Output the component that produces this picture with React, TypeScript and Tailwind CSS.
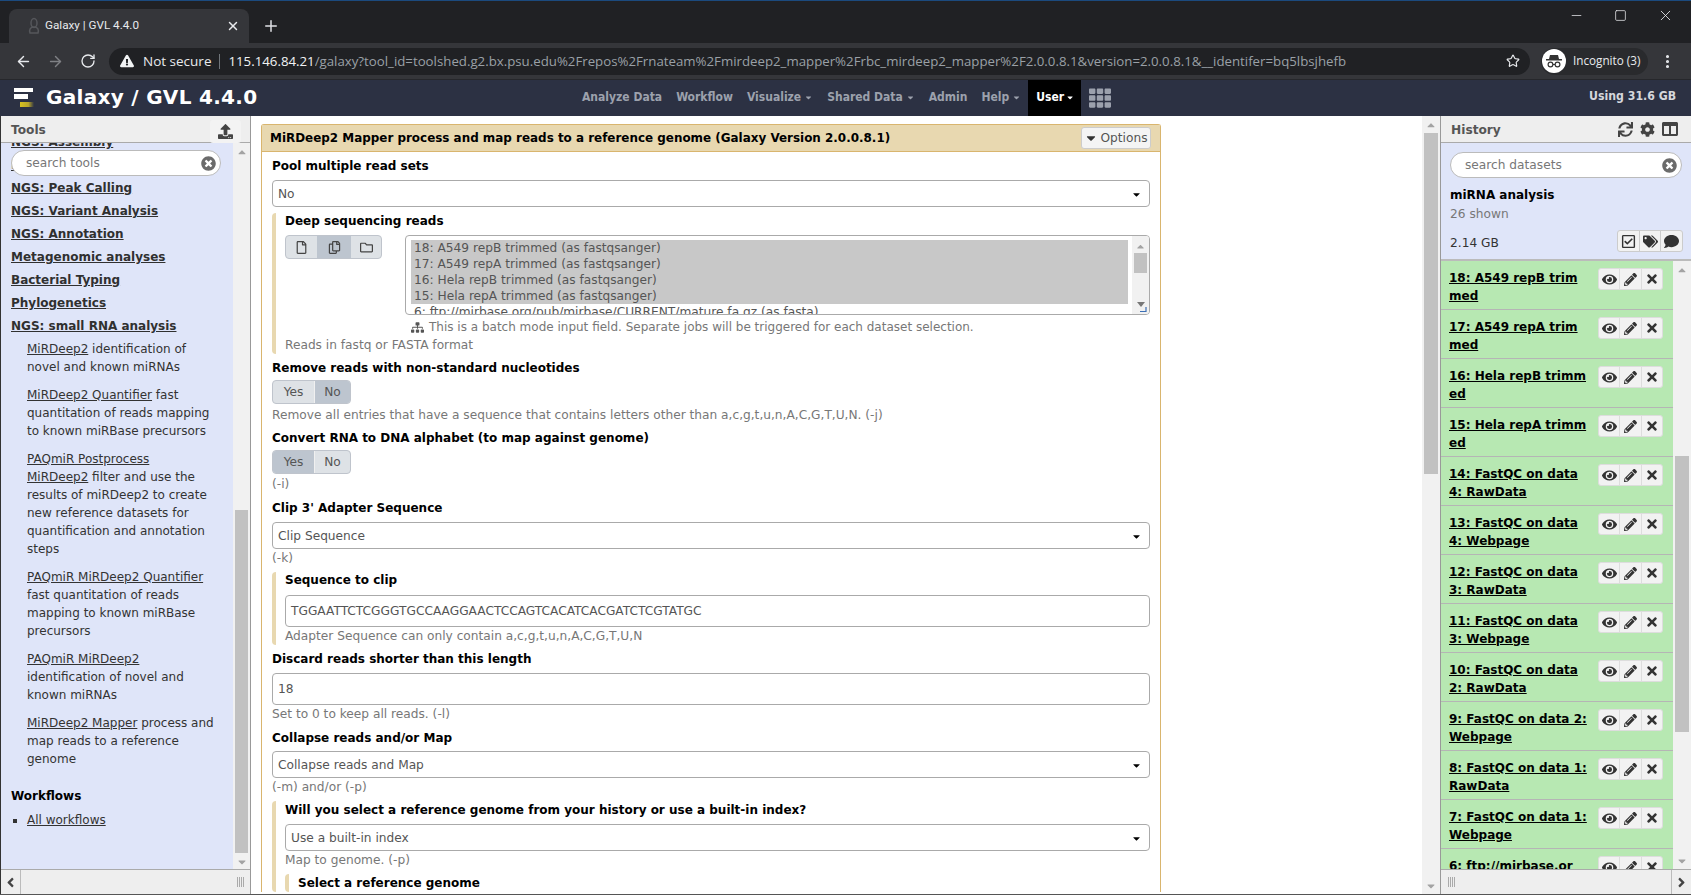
import React from "react";
import { FaEye, FaPencilAlt, FaTimes, FaSync, FaCog, FaColumns, FaRegCheckSquare, FaTags, FaComment, FaUpload, FaSitemap, FaRegFile, FaRegCopy, FaRegFolder, FaTimesCircle, FaAngleLeft, FaAngleRight, FaCaretDown, FaCaretUp, FaTh, FaExclamationTriangle } from "react-icons/fa";
import { ArrowLeft, ArrowRight, RotateCw, Star, X, Plus, Minus, Square, MoreVertical } from "lucide-react";

function VScroll({ top, thumb, cls = "w-[18px]" }: { top: number; thumb: number; cls?: string }) {
  return (
    <div className={`${cls} shrink-0 bg-[#f1f1f1] flex flex-col items-center text-[#a3a3a3]`}>
      <div className="h-[17px] flex items-center justify-center shrink-0"><FaCaretUp size={12} /></div>
      <div className="flex-1 w-full px-[2px]">
        <div className="w-full bg-[#c1c1c1]" style={{ marginTop: top, height: thumb }} />
      </div>
      <div className="h-[17px] flex items-center justify-center shrink-0"><FaCaretDown size={12} /></div>
    </div>
  );
}

function Grip({ cls }: { cls: string }) {
  return (
    <svg width="8" height="10" viewBox="0 0 8 10" className={cls} stroke="#aaa" strokeWidth="1">
      <path d="M0.5 0v10M2.5 0v10M4.5 0v10M6.5 0v10" />
    </svg>
  );
}

function Field({ value, h = "h-[27px]", caret = true }: { value: string; h?: string; caret?: boolean }) {
  return (
    <div className={`${h} border border-[#aaa] rounded-[4px] bg-white flex items-center justify-between pl-[5px] pr-[7px] pt-[1px] text-[#555]`}>
      <span>{value}</span>
      {caret && <FaCaretDown size={11} className="text-black" />}
    </div>
  );
}

function Label({ children, cls = "leading-[18px] h-[18px] pt-[1px]" }: { children: React.ReactNode; cls?: string }) {
  return <div className={`font-bold text-black text-[12px] ${cls}`}>{children}</div>;
}

function Hint({ children }: { children: React.ReactNode }) {
  return <div className="leading-[18px] text-[#777]">{children}</div>;
}

function Section({ children, cls = "" }: { children: React.ReactNode; cls?: string }) {
  return <div className={`border-l-4 border-[#e8d8b0] rounded-l-[4px] pl-[9px] ${cls}`}>{children}</div>;
}

function Toggle({ on }: { on: "Yes" | "No" }) {
  return (
    <div className="mt-[4px] flex w-[79px] h-[24px] border border-[#bfc4cc] rounded-[4px] overflow-hidden text-[#555] bg-[#dee2e6]">
      <div className={`w-[41px] flex items-center justify-center ${on === "Yes" ? "bg-[#bdc5cf]" : ""}`}>Yes</div>
      <div className={`flex-1 flex items-center justify-center border-l border-[#f0f0f0] ${on === "No" ? "bg-[#bdc5cf]" : ""}`}>No</div>
    </div>
  );
}

const history: [string, string][] = [
  ["18: A549 repB trim", "med"],
  ["17: A549 repA trim", "med"],
  ["16: Hela repB trimm", "ed"],
  ["15: Hela repA trimm", "ed"],
  ["14: FastQC on data", "4: RawData"],
  ["13: FastQC on data", "4: Webpage"],
  ["12: FastQC on data", "3: RawData"],
  ["11: FastQC on data", "3: Webpage"],
  ["10: FastQC on data", "2: RawData"],
  ["9: FastQC on data 2:", "Webpage"],
  ["8: FastQC on data 1:", "RawData"],
  ["7: FastQC on data 1:", "Webpage"],
  ["6: ftp://mirbase.or", "g/pub"],
];

const sections = ["NGS: Assembly", "NGS: Mapping", "NGS: Peak Calling", "NGS: Variant Analysis", "NGS: Annotation", "Metagenomic analyses", "Bacterial Typing", "Phylogenetics", "NGS: small RNA analysis"];

const tools: [string, string][] = [
  ["MiRDeep2", " identification of novel and known miRNAs"],
  ["MiRDeep2 Quantifier", " fast quantitation of reads mapping to known miRBase precursors"],
  ["PAQmiR Postprocess\nMiRDeep2", " filter and use the results of miRDeep2 to create new reference datasets for quantification and annotation steps"],
  ["PAQmiR MiRDeep2 Quantifier", " fast quantitation of reads mapping to known miRBase precursors"],
  ["PAQmiR MiRDeep2", " identification of novel and known miRNAs"],
  ["MiRDeep2 Mapper", " process and map reads to a reference genome"],
];

const nav: [string, boolean][] = [["Analyze Data", false], ["Workflow", false], ["Visualize", true], ["Shared Data", true], ["Admin", false], ["Help", true]];

function SearchBox({ text, cls }: { text: string; cls: string }) {
  return (
    <div className={`h-[26px] bg-white border border-[#bbb] rounded-[13px] flex items-center justify-between pl-[14px] pr-[4px] text-[#777] ${cls}`}>
      <span>{text}</span>
      <FaTimesCircle size={15} className="text-[#6b6b6b]" />
    </div>
  );
}

export default function App() {
  return (
    <div className="w-[1691px] h-[895px] overflow-hidden flex flex-col bg-[#202124] font-['DejaVu_Sans',sans-serif] text-[12.2px]">
      <div className="h-px bg-[#1b4a7e] shrink-0" />
      {/* tab strip */}
      <div className="h-[42px] shrink-0 flex items-end pl-[9px] relative font-['Roboto',sans-serif]">
        <div className="w-[240px] h-[34px] bg-[#35363a] rounded-t-[8px] flex items-center pl-[18px] pr-[9px] text-[#e8eaed]">
          <svg width="14" height="18" viewBox="0 0 14 18" className="mr-[4px] text-[#55575b]" fill="none" stroke="currentColor" strokeWidth="1.5"><ellipse cx="7" cy="6" rx="3" ry="4.5" /><path d="M3 16c-1-3 0-6 4-6s5 3 4 6z" /></svg>
          <span className="flex-1 text-[11.7px]">Galaxy | GVL 4.4.0</span>
          <X size={14} strokeWidth={2.5} className="text-[#e8eaed]" />
        </div>
        <Plus size={18} strokeWidth={2} className="text-[#dfe1e5] ml-[13px] mb-[8px]" />
        <div className="flex-1" />
        <div className="self-start mt-[6px] flex items-center text-[#e8eaed]">
          <Minus size={15} strokeWidth={1.2} className="mr-[30px]" />
          <Square size={13} strokeWidth={1.4} className="mr-[30px]" />
          <X size={17} strokeWidth={1.2} className="mr-[17px]" />
        </div>
      </div>
      {/* toolbar */}
      <div className="h-[37px] shrink-0 bg-[#35363a] flex items-center pl-[15px] font-['Open_Sans',sans-serif] border-b border-[#26272b]">
        <ArrowLeft size={17} className="text-[#e8eaed]" />
        <ArrowRight size={17} className="text-[#7f8185] ml-[15px]" />
        <RotateCw size={16} className="text-[#e8eaed] ml-[16px]" />
        <div className="ml-[13px] w-[1421px] h-[27px] rounded-[14px] bg-[#202124] flex items-center pl-[11px]">
          <FaExclamationTriangle size={14} className="text-[#f1f3f4]" />
          <span className="ml-[9px] text-[#e8eaed] text-[13.5px] pt-[1px]">Not secure</span>
          <div className="w-px h-[15px] bg-[#70757a] mx-[8px]" />
          <span className="text-[#f1f3f4] text-[13.25px] pt-[1px]">115.146.84.21</span>
          <span className="text-[#9aa0a6] text-[13.25px] pt-[1px] truncate flex-1">/galaxy?tool_id=toolshed.g2.bx.psu.edu%2Frepos%2Frnateam%2Fmirdeep2_mapper%2Frbc_mirdeep2_mapper%2F2.0.0.8.1&amp;version=2.0.0.8.1&amp;__identifer=bq5lbsjhefb</span>
          <Star size={14} strokeWidth={2} className="text-[#e8eaed] mr-[10px]" />
        </div>
        <div className="ml-[11px] w-[107px] h-[27px] rounded-[14px] bg-[#292a2d] flex items-center pl-[1px]">
          <div className="w-[24px] h-[24px] rounded-full bg-white flex items-center justify-center">
            <svg width="18" height="16" viewBox="0 0 18 16" fill="#333"><path d="M5 2h8l1 4H4z" /><rect x="1" y="6" width="16" height="1.5" /><circle cx="5.5" cy="11.5" r="2.4" fill="none" stroke="#333" strokeWidth="1.2" /><circle cx="12.5" cy="11.5" r="2.4" fill="none" stroke="#333" strokeWidth="1.2" /><path d="M7.8 11h2.4v1H7.8z" /></svg>
          </div>
          <span className="ml-[7px] text-[11.7px] text-[#e8eaed]">Incognito (3)</span>
        </div>
        <MoreVertical size={17} strokeWidth={2.4} className="text-[#e8eaed] ml-[11px]" />
      </div>
      {/* masthead */}
      <div className="h-[36px] shrink-0 bg-[#2c3143] flex items-stretch pl-[14px] relative">
        <div className="flex items-center w-[32px]">
          <svg width="20" height="20" viewBox="0 0 20 20" className="mb-[2px]">
            <defs><linearGradient id="gold" x1="0" x2="1" y1="0" y2="0"><stop offset="0" stopColor="#d8c21f" /><stop offset="0.6" stopColor="#b9a62b" /><stop offset="1" stopColor="#2c3143" /></linearGradient></defs>
            <rect x="0" y="1" width="19" height="4" fill="#fff" /><rect x="0" y="7" width="14" height="5" fill="#fff" /><rect x="6" y="15" width="14" height="5" fill="url(#gold)" />
          </svg>
        </div>
        <div className="flex items-center text-white font-bold text-[20px] tracking-[0.3px] w-[529px] pb-[3px]">Galaxy / GVL 4.4.0</div>
        <div className="flex items-stretch font-['DejaVu_Sans_Condensed','DejaVu_Sans',sans-serif] text-[12px] font-bold text-[#9ca1ad]">
          {nav.map(([t, c]) => (
            <div key={t} className="flex items-center px-[7px] pb-[2px]">
              {t}{c && <FaCaretDown size={9} className="ml-[3px]" />}
            </div>
          ))}
          <div className="flex items-center bg-black text-white px-[8px] w-[53px] pb-[2px]">User<FaCaretDown size={9} className="ml-[3px]" /></div>
          <div className="flex items-center ml-[8px]"><FaTh size={22} className="text-[#9ca1ad]" /></div>
        </div>
        <div className="flex-1" />
        <div className="flex items-center pr-[15px] pb-[3px] text-[12.2px] font-['DejaVu_Sans_Condensed','DejaVu_Sans',sans-serif] font-bold text-[#d5d7dc]">Using 31.6 GB</div>
      </div>
      {/* main */}
      <div className="flex-1 min-h-0 flex bg-white">
        {/* tools panel */}
        <div className="w-[251px] shrink-0 flex flex-col border-r border-[#999] border-l border-l-[#333]">
          <div className="h-[27px] shrink-0 bg-[#eee] border-b border-[#aaa] flex items-center justify-between pl-[10px] pr-[9px]">
            <span className="font-bold text-[#555] text-[12.2px] pt-[2px]">Tools</span>
            <div className="w-[31px] h-[23px] bg-[#f3f3f3] rounded-[3px] flex items-center justify-center mt-[4px]"><FaUpload size={15} className="text-[#444]" /></div>
          </div>
          <div className="flex-1 min-h-0 flex relative">
            <div className="flex-1 bg-[#dfe5f9] overflow-hidden text-[#333] text-[12px] pl-[10px] pr-[18.5px]">
              <div className="-mt-[12px]">
                {sections.map((s) => (
                  <div key={s} className="h-[23px] leading-[23px] font-bold underline text-[12px] text-[#303030]">{s}</div>
                ))}
                <div className="pl-[16px] pt-[2px]">
                  {tools.map(([a, b], i) => (
                    <div key={i} className="leading-[18px] mb-[10px]">
                      <span className="underline whitespace-pre-line">{a}</span>{b}
                    </div>
                  ))}
                </div>
                <div className="font-bold text-black text-[12px] mt-[19px] leading-[18px]">Workflows</div>
                <ul className="list-[square] pl-[16px] mt-[6px] leading-[18px]"><li className="underline">All workflows</li></ul>
              </div>
            </div>
            <VScroll top={350} thumb={343} cls="w-[17px]" />
            <SearchBox text="search tools" cls="absolute left-[10px] top-[7px] w-[210px]" />
          </div>
          <div className="h-[25px] shrink-0 bg-[#eee] border-t border-[#aaa] flex items-center">
            <div className="w-[20px] h-full border-r border-[#bbb] flex items-center justify-center"><FaAngleLeft size={15} className="text-[#444]" /></div>
            <div className="flex-1" />
            <Grip cls="mr-[5px]" />
          </div>
        </div>
        {/* center */}
        <div className="flex-1 min-w-0 flex">
          <div className="flex-1 min-w-0 overflow-hidden pt-[8px] pl-[10px]">
            <div className="w-[900px] border border-[#d9b56e] rounded-t-[3px] border-b-0">
              <div className="h-[27px] bg-[#e8d8b0] border-b border-[#d9b56e] flex items-center justify-between pl-[8px] pr-[9px]">
                <span className="font-bold text-black text-[11.95px] pt-[1px]">MiRDeep2 Mapper process and map reads to a reference genome (Galaxy Version 2.0.0.8.1)</span>
                <div className="w-[70px] h-[22px] bg-[#f4f4f4] border border-[#ccc] rounded-[3px] flex items-center justify-center text-[#555]"><FaCaretDown size={14} className="mr-[2px] text-[#333]" />Options</div>
              </div>
              <div className="pl-[10px] pr-[10px] pt-[4px]">
                <Label>Pool multiple read sets</Label>
                <div className="mt-[6px]"><Field value="No" /></div>
                <Section cls="mt-[6px]">
                  <Label cls="leading-[16px]">Deep sequencing reads</Label>
                  <div className="mt-[6px] flex">
                    <div className="w-[97px] h-[24px] flex bg-[#dee2e6] border border-[#bfc4cc] rounded-[4px] overflow-hidden text-[#444]">
                      <div className="w-[31px] flex items-center justify-center"><FaRegFile size={13} /></div>
                      <div className="w-[34px] bg-[#bdc5cf] flex items-center justify-center"><FaRegCopy size={13} /></div>
                      <div className="flex-1 flex items-center justify-center"><FaRegFolder size={13} /></div>
                    </div>
                    <div className="ml-[23px] flex-1 h-[80px] border border-[#aaa] rounded-[4px] flex overflow-hidden text-[#555]">
                      <div className="flex-1 pl-[5px] pr-[4px] pt-[4px] overflow-hidden">
                        <div className="bg-[#c8c8c8] pl-[3px] leading-[16px]">
                          <div>18: A549 repB trimmed (as fastqsanger)</div>
                          <div>17: A549 repA trimmed (as fastqsanger)</div>
                          <div>16: Hela repB trimmed (as fastqsanger)</div>
                          <div>15: Hela repA trimmed (as fastqsanger)</div>
                        </div>
                        <div className="pl-[3px] leading-[16px] whitespace-nowrap">6: ftp://mirbase.org/pub/mirbase/CURRENT/mature.fa.gz (as fasta)</div>
                      </div>
                      <div className="w-[17px] bg-[#f1f1f1] flex flex-col items-center text-[#a3a3a3]">
                        <FaCaretUp size={11} className="mt-[5px]" />
                        <div className="w-[13px] h-[20px] bg-[#c1c1c1] mt-[1px]" />
                        <div className="flex-1" />
                        <svg width="10" height="10" viewBox="0 0 10 10" className="mb-[2px] ml-[2px]"><path d="M0 0h8L4 5z" fill="#777" /><path d="M9 5v4.5H3" fill="none" stroke="#3b6fb5" strokeWidth="1.2" /></svg>
                      </div>
                    </div>
                  </div>
                  <div className="leading-[18px] mt-[3px] pl-[126px] text-[#777] text-[12px] flex items-center"><FaSitemap size={13} className="text-[#555] mr-[5px]" />This is a batch mode input field. Separate jobs will be triggered for each dataset selection.</div>
                  <Hint>Reads in fastq or FASTA format</Hint>
                </Section>
                <div className="mt-[4px]"><Label>Remove reads with non-standard nucleotides</Label></div>
                <Toggle on="No" />
                <div className="mt-[2px]"><Hint>Remove all entries that have a sequence that contains letters other than a,c,g,t,u,n,A,C,G,T,U,N. (-j)</Hint></div>
                <div className="mt-[4px]"><Label>Convert RNA to DNA alphabet (to map against genome)</Label></div>
                <Toggle on="Yes" />
                <div className="mt-[1px]"><Hint>(-i)</Hint></div>
                <div className="mt-[5px]"><Label>Clip 3' Adapter Sequence</Label></div>
                <div className="mt-[6px]"><Field value="Clip Sequence" /></div>
                <Hint>(-k)</Hint>
                <Section cls="mt-[5px]">
                  <Label cls="leading-[16px]">Sequence to clip</Label>
                  <div className="mt-[7px]"><Field value="TGGAATTCTCGGGTGCCAAGGAACTCCAGTCACATCACGATCTCGTATGC" h="h-[32px]" caret={false} /></div>
                  <Hint>Adapter Sequence can only contain a,c,g,t,u,n,A,C,G,T,U,N</Hint>
                </Section>
                <div className="mt-[4px]"><Label>Discard reads shorter than this length</Label></div>
                <div className="mt-[6px]"><Field value="18" h="h-[32px]" caret={false} /></div>
                <Hint>Set to 0 to keep all reads. (-l)</Hint>
                <div className="mt-[5px]"><Label>Collapse reads and/or Map</Label></div>
                <div className="mt-[5px]"><Field value="Collapse reads and Map" /></div>
                <Hint>(-m) and/or (-p)</Hint>
                <Section cls="mt-[5px]">
                  <Label cls="leading-[18px]">Will you select a reference genome from your history or use a built-in index?</Label>
                  <div className="mt-[5px]"><Field value="Use a built-in index" /></div>
                  <Hint>Map to genome. (-p)</Hint>
                  <Section cls="mt-[5px]">
                    <Label cls="leading-[18px]">Select a reference genome</Label>
                  </Section>
                </Section>
              </div>
            </div>
          </div>
          <VScroll top={0} thumb={341} cls="w-[18px]" />
        </div>
        {/* history */}
        <div className="w-[251px] shrink-0 flex flex-col border-l border-[#999]">
          <div className="h-[27px] shrink-0 bg-[#eee] border-b border-[#aaa] flex items-center justify-between pl-[10px] pr-[13px]">
            <span className="font-bold text-[#555] text-[12.2px] pt-[2px]">History</span>
            <div className="flex items-center gap-[7px] text-[#444]">
              <FaSync size={15} /><FaCog size={15} /><FaColumns size={16} />
            </div>
          </div>
          <div className="h-[118px] shrink-0 bg-[#dfe5f9] border-b-2 border-[#bbb] pl-[9px] pr-[8px] pt-[9px]">
            <SearchBox text="search datasets" cls="w-[232px]" />
            <div className="font-bold text-black text-[12px] leading-[18px] mt-[8px]">miRNA analysis</div>
            <div className="text-[#777] leading-[18px] mt-[1px]">26 shown</div>
            <div className="flex justify-between items-start mt-[7px]">
              <span className="leading-[18px] mt-[4px] text-[#333]">2.14 GB</span>
              <div className="flex h-[22px] w-[66px] border border-[#ccc] rounded-[3px] bg-[#f2f2f2] text-[#333] divide-x divide-[#ccc]">
                <div className="flex-1 flex items-center justify-center"><FaRegCheckSquare size={15} /></div>
                <div className="flex-1 flex items-center justify-center"><FaTags size={15} /></div>
                <div className="flex-1 flex items-center justify-center"><FaComment size={15} /></div>
              </div>
            </div>
          </div>
          <div className="flex-1 min-h-0 flex">
            <div className="flex-1 min-w-0 overflow-hidden bg-[#b7e8b2]">
              {history.map(([a, b]) => (
                <div key={a} className="h-[49px] border-b border-[#b5b5b5] flex pl-[8px] pr-[10px] pt-[6px]">
                  <div className="flex-1 pt-[2px] font-bold text-[12px] leading-[18px] underline text-black whitespace-nowrap"><div>{a}</div><div>{b}</div></div>
                  <div className="flex w-[65px] h-[22px] mt-[1px] border border-[#ddd] rounded-[3px] bg-[#f2f2f2] text-[#333] divide-x divide-[#ddd]">
                    <div className="flex-1 flex items-center justify-center"><FaEye size={15} /></div>
                    <div className="flex-1 flex items-center justify-center"><FaPencilAlt size={13} /></div>
                    <div className="flex-1 flex items-center justify-center"><FaTimes size={14} /></div>
                  </div>
                </div>
              ))}
            </div>
            <VScroll top={178} thumb={276} cls="w-[18px]" />
          </div>
          <div className="h-[25px] shrink-0 bg-[#eee] border-t border-[#aaa] flex items-center">
            <Grip cls="ml-[7px]" />
            <div className="flex-1" />
            <div className="w-[20px] h-full border-l border-[#bbb] flex items-center justify-center"><FaAngleRight size={15} className="text-[#444]" /></div>
          </div>
        </div>
      </div>
      <div className="h-px bg-[#555] shrink-0" />
    </div>
  );
}
